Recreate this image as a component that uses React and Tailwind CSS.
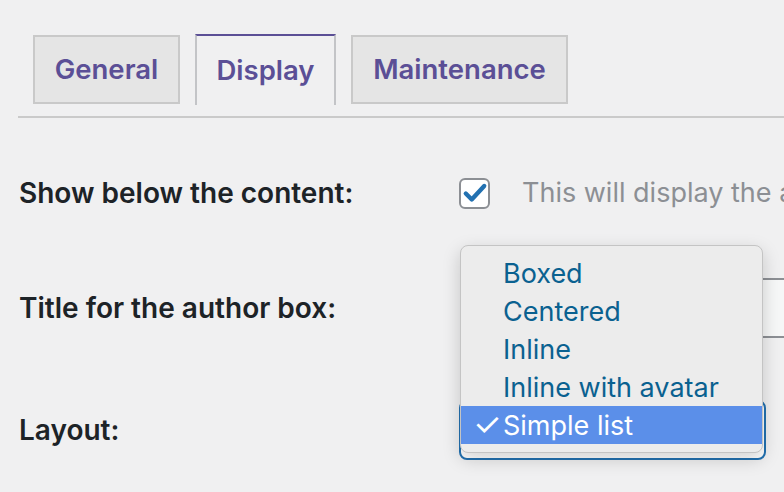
import React from 'react';

const font = { fontFamily: 'Inter, "Liberation Sans", sans-serif' };

const tabs = [
    { name: 'General', active: false, w: 'w-[147px]' },
    { name: 'Display', active: true, w: 'w-[141px]' },
    { name: 'Maintenance', active: false, w: 'w-[217px]' },
];

const layouts = ['Boxed', 'Centered', 'Inline', 'Inline with avatar', 'Simple list'];

const Check = () => (
    <svg viewBox="0 0 24 24" className="w-[26px] h-[26px]">
        <path d="M3.5 12.5l5.5 5.5L20.5 5.5" fill="none" stroke="#2271b1" strokeWidth="4" strokeLinecap="round" strokeLinejoin="round" />
    </svg>
);

export default function App() {
    return (
        <div className="w-[784px] h-[492px] bg-[#f0f0f1] overflow-hidden relative" style={font}>
            {/* Tabs */}
            <div className="pt-[34px] pl-[33px] flex items-start gap-[15px]">
                {tabs.map((t) =>
                    t.active ? (
                        <div
                            key={t.name}
                            className={`${t.w} shrink-0 h-[71px] border-2 border-[#c3c4c7] border-t-[#5b4f96] border-b-0 bg-[#f0f0f1] flex items-center justify-center text-[27.5px] font-semibold text-[#5b4f96]`}
                        >
                            {t.name}
                        </div>
                    ) : (
                        <div
                            key={t.name}
                            className={`${t.w} shrink-0 h-[69px] mt-[1px] border-2 border-[#c9c9c9] bg-[#e5e5e5] flex items-center justify-center text-[27.5px] font-semibold text-[#5b4f96]`}
                        >
                            {t.name}
                        </div>
                    )
                )}
            </div>
            <div className="ml-[18px] mt-[11px] h-[2px] bg-[#cacaca]" />

            {/* Settings rows */}
            <div className="pl-[19px]">
                <div className="flex items-center h-[58px] mt-[46px]">
                    <div className="w-[440px] shrink-0 text-[28px] font-semibold text-[#1d2327]">Show below the content:</div>
                    <div className="flex items-center shrink-0">
                        <div className="w-[31px] h-[31px] rounded-[6px] border-2 border-[#8c8f94] bg-white flex items-center justify-center">
                            <Check />
                        </div>
                        <span className="ml-[32px] text-[27px] text-[#8c8f94] whitespace-nowrap">This will display the author box</span>
                    </div>
                </div>

                <div className="flex items-center h-[60px] mt-[56px]">
                    <div className="w-[440px] shrink-0 text-[28px] font-semibold text-[#1d2327]">Title for the author box:</div>
                    <div className="w-[400px] ml-[4px] shrink-0 h-[60px] border-2 border-[#8c8f94] rounded-[8px] bg-[#f6f7f7]" />
                </div>

                <div className="flex items-center h-[60px] mt-[62px]">
                    <div className="w-[440px] shrink-0 text-[28px] font-semibold text-[#1d2327]">Layout:</div>
                    <div className="w-[307px] shrink-0 h-[60px] border-2 border-[#2271b1] rounded-[8px] bg-white" />
                </div>
            </div>

            {/* Open select menu */}
            <div className="absolute left-[460px] top-[245px] w-[303px] h-[208px] rounded-[8px] border border-[#c4c4c4] bg-[#ececec] shadow-[0_6px_18px_rgba(0,0,0,0.18)] pt-[8px]">
                {layouts.map((l) => {
                    const sel = l === 'Simple list';
                    return (
                        <div
                            key={l}
                            className={`h-[38px] flex items-center text-[27px] leading-none ${sel ? 'bg-[#5b8fe9] text-white' : 'text-[#0a6190]'}`}
                        >
                            <span className="w-[42px] pl-[12px] text-[32px]">{sel ? '✓' : ''}</span>
                            <span>{l}</span>
                        </div>
                    );
                })}
            </div>
        </div>
    );
}
